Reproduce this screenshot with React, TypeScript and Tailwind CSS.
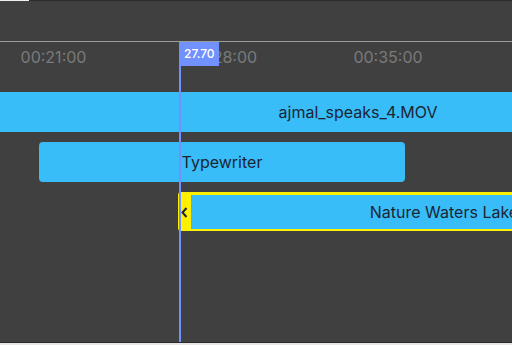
import React from 'react';

const TICKS = [
  { label: '00:21:00', width: 'w-[167px]' },
  { label: '00:28:00', width: 'w-[171px]' },
  { label: '00:35:00', width: 'w-[160px]' },
];

function Playhead() {
  return (
    <div className="absolute left-[179px] top-[42px] bottom-[3px] pointer-events-none">
      <div className="flex h-[24px] w-[40px] items-center bg-[#7191ff] pl-[5px] text-[12px] font-medium leading-none text-white">
        27.70
      </div>
      <div className="absolute left-0 top-0 bottom-0 w-[2px] bg-[#7191ff]" />
    </div>
  );
}

export default function App() {
  return (
    <div
      className="relative flex h-[345px] w-[512px] flex-col overflow-hidden bg-[#404040]"
      style={{ fontFamily: 'Inter, "Liberation Sans", sans-serif' }}
    >
      {/* window top edge */}
      <div className="flex h-px shrink-0">
        <div className="w-[29px] bg-[#efefef]" />
        <div className="flex-1 bg-[#2c2c2c]" />
      </div>
      <div className="h-[40px] shrink-0" />
      <div className="h-px shrink-0 bg-[#9c9c9c]" />

      {/* ruler */}
      <div className="flex h-[50px] shrink-0 -ml-[30px] pt-[3px]">
        {TICKS.map((tick) => (
          <div key={tick.label} className={`${tick.width} shrink-0 text-center text-[16px] leading-6 text-[#7a7a7a]`}>
            {tick.label}
          </div>
        ))}
      </div>

      {/* tracks */}
      <div className="flex flex-col gap-[10px] overflow-hidden text-[16px] text-[#1b2535]">
        <div className="flex h-[40px]">
          <div className="flex w-[716px] shrink-0 items-center justify-center bg-[#38bdf8]">ajmal_speaks_4.MOV</div>
        </div>
        <div className="flex h-[40px]">
          <div className="ml-[39px] flex w-[366px] items-center justify-center rounded-[4px] bg-[#38bdf8]">
            Typewriter
          </div>
        </div>
        <div className="flex h-[39px]">
          <div className="ml-[178px] flex w-[522px] shrink-0 rounded-[3px] bg-[#fff000] pt-[3px] pb-[2px] pr-[3px]">
            <div className="flex w-[13px] shrink-0 items-center justify-center">
              <svg width="7" height="11" viewBox="0 0 7 11" fill="none">
                <polyline points="5.5,1 1.5,5.5 5.5,10" stroke="#1b2535" strokeWidth="2" />
              </svg>
            </div>
            <div className="flex flex-1 items-center justify-center bg-[#38bdf8]">Nature Waters Lake</div>
          </div>
        </div>
      </div>

      <div className="flex-1" />
      <div className="h-px shrink-0 bg-[#2a2a2a]" />
      <div className="h-[2px] shrink-0 bg-[#e9e6e6]" />

      <Playhead />
    </div>
  );
}
